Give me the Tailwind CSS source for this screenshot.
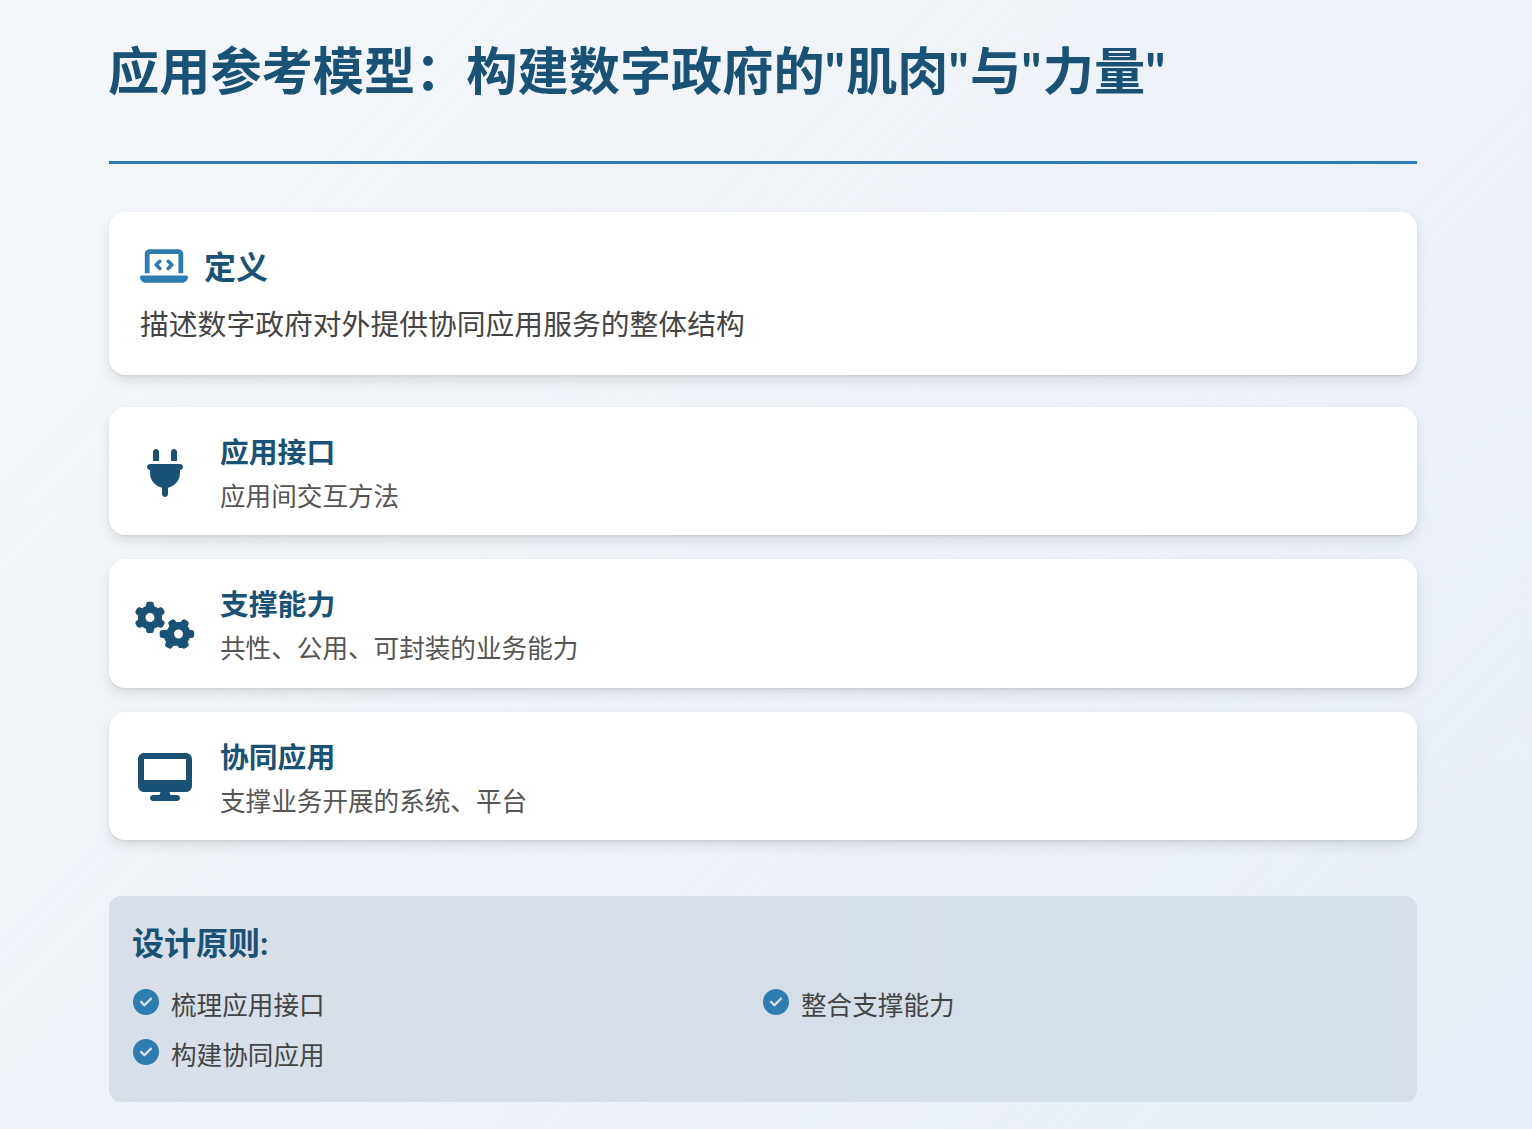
<!DOCTYPE html>
<html lang="zh-CN">
<head>
    <meta charset="UTF-8">
    <title>应用参考模型</title>
    <script src="https://cdn.jsdelivr.net/npm/@tailwindcss/browser@4"></script>
</head>
<body class="h-[1129px] overflow-hidden bg-linear-[135deg] from-[#f4f7fa] to-[#e8eef7] font-['Lato','Noto_Sans_CJK_SC',sans-serif]">
    <div class="pl-[109px] pr-[115px] pt-[34px]">

        <!-- Title -->
        <div class="border-b-[3px] border-[#2e7db0] h-[130px]">
            <h1 class="-ml-px text-[51.2px] leading-[72px] font-bold text-[#1a5276]">应用参考模型：构建数字政府的<span class="tracking-[1.25px]">"</span>肌肉<span class="tracking-[1.25px]">"</span>与<span class="tracking-[1.25px]">"</span>力量<span class="tracking-[1.25px]">"</span></h1>
        </div>

        <!-- Definition -->
        <div class="mt-[48px] h-[163px] bg-white rounded-2xl shadow-[0_1px_2px_rgba(0,0,0,0.08),0_6px_14px_-2px_rgba(0,0,0,0.13)] pl-[31px] pr-8 pt-[31px]">
            <div class="flex items-center h-[48px]">
                <svg class="w-12 h-12 mr-4 -mt-[3px] shrink-0 fill-[#2e7db0]" viewBox="0 0 640 512"><path d="M64 96c0-35.3 28.7-64 64-64H512c35.3 0 64 28.7 64 64V352H512V96H128V352H64V96zM0 403.2C0 392.6 8.6 384 19.2 384H620.8c10.6 0 19.2 8.6 19.2 19.2c0 42.4-34.4 76.8-76.8 76.8H76.8C34.4 480 0 445.6 0 403.2zM281 209l-31 31 31 31c9.4 9.4 9.4 24.6 0 33.9s-24.6 9.4-33.9 0l-48-48c-9.4-9.4-9.4-24.6 0-33.9l48-48c9.4-9.4 24.6-9.4 33.9 0s9.4 24.6 0 33.9zM393 175l48 48c9.4 9.4 9.4 24.6 0 33.9l-48 48c-9.4 9.4-24.6 9.4-33.9 0s-9.4-24.6 0-33.9l31-31-31-31c-9.4-9.4-9.4-24.6 0-33.9s24.6-9.4 33.9 0z"/></svg>
                <h2 class="text-[32px] font-bold text-[#1a5276]">定义</h2>
            </div>
            <p class="mt-[10px] text-[28.8px] leading-[46px] text-[#444]">描述数字政府对外提供协同应用服务的整体结构</p>
        </div>

        <!-- Items -->
        <div class="mt-8 flex flex-col gap-6">
            <div class="h-[128.4px] bg-white rounded-2xl shadow-[0_1px_2px_rgba(0,0,0,0.08),0_6px_14px_-2px_rgba(0,0,0,0.13)] flex items-center">
                <div class="w-[111px] pl-px pt-[3px] flex justify-center shrink-0">
                    <svg class="h-12 w-[36px] fill-[#1a5276]" viewBox="0 0 384 512"><path d="M96 0C78.3 0 64 14.3 64 32v96h64V32c0-17.7-14.3-32-32-32zM288 0c-17.7 0-32 14.3-32 32v96h64V32c0-17.7-14.3-32-32-32zM32 160c-17.7 0-32 14.3-32 32s14.3 32 32 32v32c0 77.4 55 142 128 156.8V480c0 17.7 14.3 32 32 32s32-14.3 32-32V412.8C297 398 352 333.4 352 256V224c17.7 0 32-14.3 32-32s-14.3-32-32-32H32z"/></svg>
                </div>
                <div class="pt-[4px]">
                    <h3 class="text-[28.8px] leading-[46px] font-bold text-[#1a5276]">应用接口</h3>
                    <p class="mt-px text-[25.6px] leading-[41px] text-[#555]">应用间交互方法</p>
                </div>
            </div>
            <div class="h-[128.4px] bg-white rounded-2xl shadow-[0_1px_2px_rgba(0,0,0,0.08),0_6px_14px_-2px_rgba(0,0,0,0.13)] flex items-center">
                <div class="w-[111px] pl-px pt-[3px] flex justify-center shrink-0">
                    <svg class="h-12 w-[60px] fill-[#1a5276]" viewBox="0 0 640 512"><path d="M308.5 135.3c7.1-6.3 9.9-16.2 6.2-25c-2.3-5.3-4.8-10.5-7.6-15.5L304 89.4c-3-5-6.3-9.9-9.8-14.6c-5.7-7.6-15.7-10.1-24.7-7.1l-28.2 9.3c-10.7-8.8-23-16-36.2-20.7L199 27.1c-1.9-9.3-9.1-16.7-18.5-17.8C173.9 8.4 167.2 8 160.4 8h-.7c-6.8 0-13.5 .4-20.1 1.2c-9.4 1.1-16.6 8.6-18.5 17.8L115 56.1c-13.3 4.7-25.5 11.9-36.2 20.7L50.5 67.5c-9-3-19-.5-24.7 7.1c-3.5 4.7-6.8 9.6-9.9 14.6l-3 5.3c-2.8 5-5.3 10.2-7.6 15.6c-3.7 8.7-.9 18.6 6.2 25l22.2 19.8C32.6 161.9 32 168.9 32 176s.6 14.1 1.7 20.9L11.5 216.7c-7.1 6.3-9.9 16.2-6.2 25c2.3 5.3 4.8 10.5 7.6 15.6l3 5.2c3 5.1 6.3 9.9 9.9 14.6c5.7 7.6 15.7 10.1 24.7 7.1l28.2-9.3c10.7 8.8 23 16 36.2 20.6l6.1 29.1c1.9 9.3 9.1 16.7 18.5 17.8c6.7 .8 13.5 1.2 20.4 1.2s13.7-.4 20.4-1.2c9.4-1.1 16.6-8.6 18.5-17.8l6.1-29.1c13.3-4.7 25.5-11.9 36.2-20.6l28.2 9.3c9 3 19 .5 24.7-7.1c3.5-4.7 6.8-9.5 9.8-14.6l3.1-5.4c2.8-5 5.3-10.2 7.6-15.5c3.7-8.7 .9-18.6-6.2-25l-22.2-19.8c1.1-6.8 1.7-13.8 1.7-20.9s-.6-14.1-1.7-20.9l22.2-19.8zM112 176a48 48 0 1 1 96 0 48 48 0 1 1 -96 0zM504.7 500.5c6.3 7.1 16.2 9.9 25 6.2c5.3-2.3 10.5-4.8 15.5-7.6l5.4-3.1c5-3 9.9-6.3 14.6-9.8c7.6-5.7 10.1-15.7 7.1-24.7l-9.3-28.2c8.8-10.7 16-23 20.6-36.2l29.1-6.1c9.3-1.9 16.7-9.1 17.8-18.5c.8-6.7 1.2-13.5 1.2-20.4s-.4-13.7-1.2-20.4c-1.1-9.4-8.6-16.6-17.8-18.5L583.9 307c-4.7-13.3-11.9-25.5-20.6-36.2l9.3-28.2c3-9 .5-19-7.1-24.7c-4.7-3.5-9.6-6.8-14.6-9.9l-5.3-3c-5-2.8-10.2-5.3-15.6-7.6c-8.7-3.7-18.6-.9-25 6.2l-19.8 22.2c-6.8-1.1-13.8-1.7-20.9-1.7s-14.1 .6-20.9 1.7l-19.8-22.2c-6.3-7.1-16.2-9.9-25-6.2c-5.3 2.3-10.5 4.8-15.6 7.6l-5.2 3c-5.1 3-9.9 6.3-14.6 9.9c-7.6 5.7-10.1 15.7-7.1 24.7l9.3 28.2c-8.8 10.7-16 23-20.6 36.2L282 313.1c-9.3 1.9-16.7 9.1-17.8 18.5c-.8 6.7-1.2 13.5-1.2 20.4s.4 13.7 1.2 20.4c1.1 9.4 8.6 16.6 17.8 18.5l29.1 6.1c4.7 13.3 11.9 25.5 20.6 36.2l-9.3 28.2c-3 9-.5 19 7.1 24.7c4.7 3.5 9.5 6.8 14.6 9.8l5.4 3.1c5 2.8 10.2 5.3 15.5 7.6c8.7 3.7 18.6 .9 25-6.2l19.8-22.2c6.8 1.1 13.8 1.7 20.9 1.7s14.1-.6 20.9-1.7l19.8 22.2zM464 304a48 48 0 1 1 0 96 48 48 0 1 1 0-96z"/></svg>
                </div>
                <div class="pt-[2px]">
                    <h3 class="text-[28.8px] leading-[46px] font-bold text-[#1a5276]">支撑能力</h3>
                    <p class="mt-px text-[25.6px] leading-[41px] text-[#555]">共性、公用、可封装的业务能力</p>
                </div>
            </div>
            <div class="h-[128.4px] bg-white rounded-2xl shadow-[0_1px_2px_rgba(0,0,0,0.08),0_6px_14px_-2px_rgba(0,0,0,0.13)] flex items-center">
                <div class="w-[111px] pl-px pt-[3px] flex justify-center shrink-0">
                    <svg class="h-12 w-[54px] fill-[#1a5276]" viewBox="0 0 576 512"><path d="M64 0C28.7 0 0 28.7 0 64V352c0 35.3 28.7 64 64 64H240l-10.7 32H160c-17.7 0-32 14.3-32 32s14.3 32 32 32H416c17.7 0 32-14.3 32-32s-14.3-32-32-32H346.7L336 416H512c35.3 0 64-28.7 64-64V64c0-35.3-28.7-64-64-64H64zM512 64V288H64V64H512z"/></svg>
                </div>
                <div class="pt-[4px]">
                    <h3 class="text-[28.8px] leading-[46px] font-bold text-[#1a5276]">协同应用</h3>
                    <p class="mt-px text-[25.6px] leading-[41px] text-[#555]">支撑业务开展的系统、平台</p>
                </div>
            </div>
        </div>

        <!-- Design principles -->
        <div class="mt-[56px] h-[206px] rounded-xl bg-linear-to-r from-[#d8dfe9] to-[#d4dfe8] px-6 pt-[19px]">
            <h4 class="-ml-px text-[32px] leading-[56px] font-bold text-[#1a5276]">设计原则:</h4>
            <div class="mt-[14px] grid grid-cols-2 text-[25.6px] leading-[41px] text-[#444]">
                <div class="h-[50px] flex items-start">
                    <svg class="w-[26px] h-[26px] mt-[4px] mr-3 shrink-0 fill-[#2e7db0]" viewBox="0 0 512 512"><path d="M256 512A256 256 0 1 0 256 0a256 256 0 1 0 0 512zM369 209L241 337c-9.4 9.4-24.6 9.4-33.9 0l-64-64c-9.4-9.4-9.4-24.6 0-33.9s24.6-9.4 33.9 0l47 47L335 175c9.4-9.4 24.6-9.4 33.9 0s9.4 24.6 0 33.9z"/></svg>
                    <span>梳理应用接口</span>
                </div>
                <div class="h-[50px] flex items-start">
                    <svg class="w-[26px] h-[26px] mt-[4px] mr-3 shrink-0 fill-[#2e7db0]" viewBox="0 0 512 512"><path d="M256 512A256 256 0 1 0 256 0a256 256 0 1 0 0 512zM369 209L241 337c-9.4 9.4-24.6 9.4-33.9 0l-64-64c-9.4-9.4-9.4-24.6 0-33.9s24.6-9.4 33.9 0l47 47L335 175c9.4-9.4 24.6-9.4 33.9 0s9.4 24.6 0 33.9z"/></svg>
                    <span>整合支撑能力</span>
                </div>
                <div class="h-[50px] flex items-start">
                    <svg class="w-[26px] h-[26px] mt-[4px] mr-3 shrink-0 fill-[#2e7db0]" viewBox="0 0 512 512"><path d="M256 512A256 256 0 1 0 256 0a256 256 0 1 0 0 512zM369 209L241 337c-9.4 9.4-24.6 9.4-33.9 0l-64-64c-9.4-9.4-9.4-24.6 0-33.9s24.6-9.4 33.9 0l47 47L335 175c9.4-9.4 24.6-9.4 33.9 0s9.4 24.6 0 33.9z"/></svg>
                    <span>构建协同应用</span>
                </div>
            </div>
        </div>
    </div>
</body>
</html>
